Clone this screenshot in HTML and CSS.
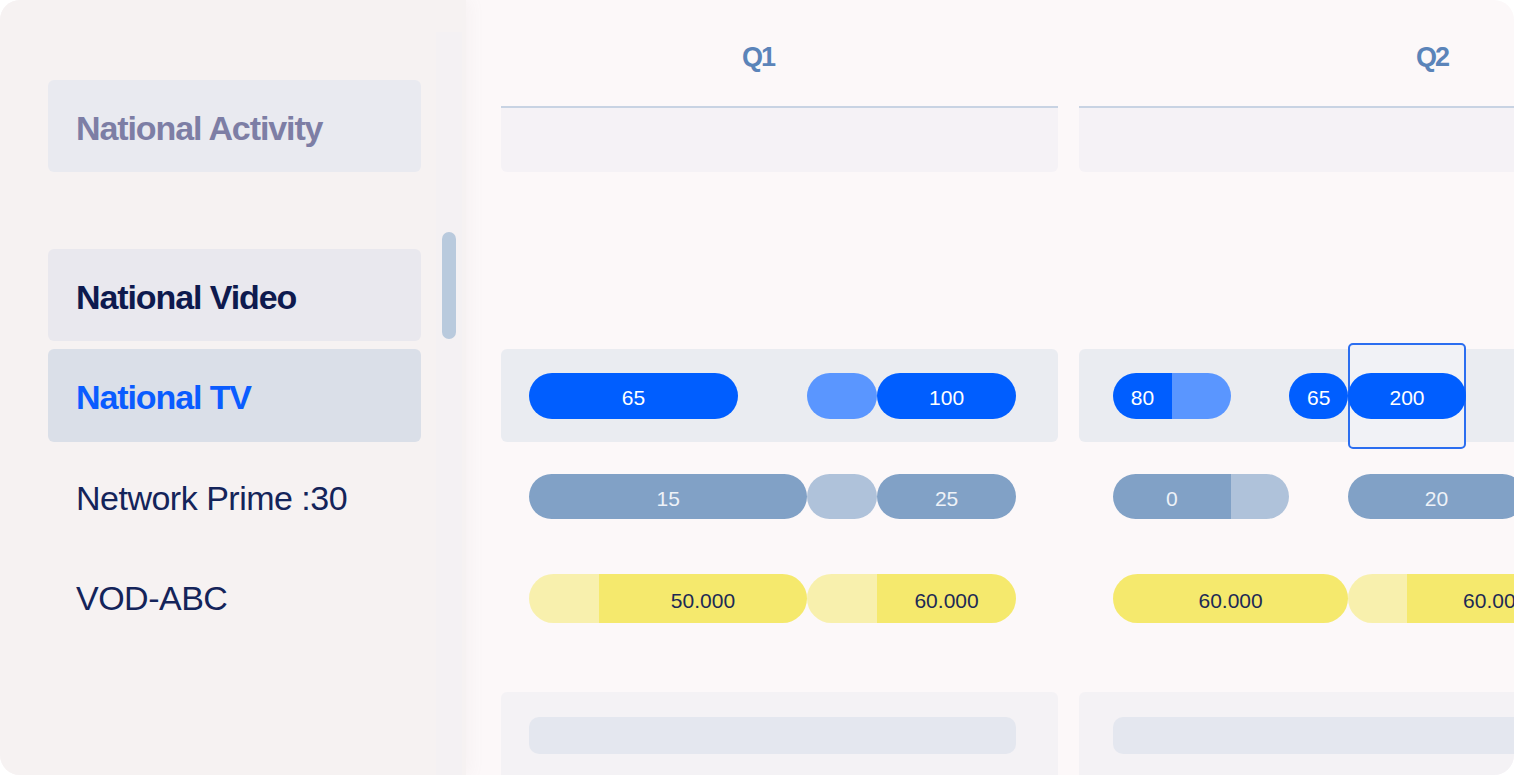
FILE: index.html
```html
<!DOCTYPE html>
<html lang="en">
<head>
<meta charset="utf-8">
<title>Media plan</title>
<link rel="stylesheet" href="styles.css">
</head>
<body>
<div class="card">
  <aside class="side">
    <div class="list">
      <div class="item item-activity">National Activity</div>
      <div class="item item-video">National Video</div>
      <div class="item item-tv">National TV</div>
      <div class="row-label">Network Prime :30</div>
      <div class="row-label">VOD-ABC</div>
    </div>
    <div class="scroll"><div class="thumb"></div></div>
  </aside>

  <main class="board">
    <section class="quarter q1">
      <div class="q-head">Q1</div>
      <div class="q-sub"></div>
      <div class="q-gap"></div>
      <div class="q-row tv-row">
        <div class="track">
          <div class="pill blue" style="grid-column:1 / span 3"><span class="seg dark">65</span></div>
          <div class="pill blue" style="grid-column:5 / span 1"><span class="seg light"></span></div>
          <div class="pill blue" style="grid-column:6 / span 2"><span class="seg dark">100</span></div>
        </div>
      </div>
      <div class="q-row net-row">
        <div class="track">
          <div class="pill steel" style="grid-column:1 / span 4"><span class="seg dark">15</span></div>
          <div class="pill steel" style="grid-column:5 / span 1"><span class="seg light"></span></div>
          <div class="pill steel" style="grid-column:6 / span 2"><span class="seg dark">25</span></div>
        </div>
      </div>
      <div class="q-row vod-row">
        <div class="track">
          <div class="pill yellow" style="grid-column:1 / span 4"><span class="seg light" style="flex:1"></span><span class="seg dark" style="flex:3">50.000</span></div>
          <div class="pill yellow" style="grid-column:5 / span 3"><span class="seg light" style="flex:1"></span><span class="seg dark" style="flex:2">60.000</span></div>
        </div>
      </div>
      <div class="q-row ghost-row">
        <div class="track">
          <div class="ghost" style="grid-column:1 / span 7"></div>
        </div>
      </div>
    </section>

    <section class="quarter q2">
      <div class="q-head">Q2</div>
      <div class="q-sub"></div>
      <div class="q-gap"></div>
      <div class="q-row tv-row">
        <div class="track">
          <div class="pill blue" style="grid-column:1 / span 2"><span class="seg dark" style="flex:1">80</span><span class="seg light" style="flex:1"></span></div>
          <div class="pill blue" style="grid-column:4 / span 1"><span class="seg dark">65</span></div>
          <div class="pill blue selected" style="grid-column:5 / span 2"><span class="seg dark">200</span></div>
        </div>
      </div>
      <div class="q-row net-row">
        <div class="track">
          <div class="pill steel" style="grid-column:1 / span 3"><span class="seg dark" style="flex:2">0</span><span class="seg light" style="flex:1"></span></div>
          <div class="pill steel" style="grid-column:5 / span 3"><span class="seg dark">20</span></div>
        </div>
      </div>
      <div class="q-row vod-row">
        <div class="track">
          <div class="pill yellow" style="grid-column:1 / span 4"><span class="seg dark">60.000</span></div>
          <div class="pill yellow" style="grid-column:5 / span 4"><span class="seg light" style="flex:1"></span><span class="seg dark" style="flex:3">60.000</span></div>
        </div>
      </div>
      <div class="q-row ghost-row">
        <div class="track">
          <div class="ghost" style="grid-column:1 / span 9"></div>
        </div>
      </div>
    </section>
  </main>
</div>
</body>
</html>
```

FILE: styles.css
```css
* { box-sizing: border-box; }

html, body {
  margin: 0;
  padding: 0;
  background: #ffffff;
}

body {
  font-family: "Liberation Sans", Arial, sans-serif;
  width: 1514px;
  height: 776px;
  overflow: hidden;
}

.card {
  width: 1514px;
  height: 775px;
  border-radius: 20px;
  overflow: hidden;
  display: flex;
  background: #fcf8f9;
}

/* ---------- left panel ---------- */
.side {
  flex: 0 0 466px;
  display: flex;
  padding-left: 48px;
  background: #f6f2f2;
  box-shadow: 5px 0 14px rgba(170, 150, 160, 0.06);
  position: relative;
  z-index: 1;
}

.list {
  width: 373px;
  padding-top: 80px;
  display: flex;
  flex-direction: column;
}

.list > * { flex-shrink: 0; }

.item {
  height: 92px;
  display: flex;
  align-items: center;
  padding-left: 28px;
  padding-top: 4px;
  border-radius: 6px;
  font-size: 34px;
  font-weight: 700;
  letter-spacing: -1.1px;
}

.item-activity {
  background: #e9eaf0;
  color: #7d7ea5;
  margin-bottom: 77px;
}

.item-video {
  background: #e9e8ee;
  color: #0e1a4e;
  margin-bottom: 8px;
}

.item-tv {
  height: 93px;
  background: #dadfe8;
  color: #0a5cff;
}

.row-label {
  height: 100px;
  display: flex;
  align-items: center;
  padding-left: 28px;
  font-size: 34px;
  letter-spacing: -0.5px;
  color: #14245a;
}

.item-tv + .row-label { margin-top: 6px; }

.scroll {
  width: 26px;
  margin-left: 15px;
  margin-top: 32px;
  background: rgba(238, 238, 245, 0.3);
}

.thumb {
  width: 14px;
  height: 107px;
  margin: 200px 0 0 6px;
  border-radius: 7px;
  background: #b9cadd;
}

/* ---------- board ---------- */
.board {
  flex: 1;
  display: flex;
  gap: 21px;
  padding-left: 35px;
  overflow: hidden;
}

.quarter {
  display: flex;
  flex-direction: column;
  flex: 0 0 auto;
}

.quarter > * { flex-shrink: 0; }

.q1 { width: 557px; }
.q2 { width: 600px; }

.q-head {
  height: 106px;
  display: flex;
  align-items: center;
  padding-top: 8px;
  font-size: 27px;
  font-weight: 700;
  letter-spacing: -2px;
  color: #5b84b9;
}

.q1 .q-head { padding-left: 241px; }
.q2 .q-head { padding-left: 337px; }

.q-sub {
  height: 66px;
  border-top: 2px solid #c8d3e3;
  background: #f5f2f6;
  border-radius: 0 0 6px 6px;
}

.q-gap { height: 177px; }

.q1 .track { padding-left: 28px; grid-template-columns: repeat(7, 69.6px); }
.q2 .track { padding-left: 34px; grid-template-columns: repeat(9, 58.8px); }

.track {
  display: grid;
  align-items: stretch;
}

.tv-row {
  height: 93px;
  padding-top: 24px;
  background: #eaecf1;
  border-radius: 6px;
}

.tv-row .track { height: 46px; }

.net-row { padding-top: 32px; }
.net-row .track { height: 45px; }

.vod-row { padding-top: 55px; }
.vod-row .track { height: 49px; }

.ghost-row {
  margin-top: 69px;
  height: 100px;
  padding-top: 25px;
  background: #f4f2f5;
  border-radius: 6px 6px 0 0;
}

.ghost-row .track { height: 37px; }

.ghost {
  background: #e4e7ef;
  border-radius: 10px;
}

/* ---------- pills ---------- */
.pill {
  display: flex;
  border-radius: 999px;
  overflow: hidden;
  font-size: 21px;
  position: relative;
}

.seg {
  flex: 1;
  display: flex;
  align-items: center;
  justify-content: center;
  padding-top: 4px;
}

.blue .dark { background: #005eff; color: #ffffff; }
.blue .light { background: #5a96ff; }

.steel .dark { background: #81a1c6; color: #eef2f8; }
.steel .light { background: #afc2da; }

.yellow .dark { background: #f5e96d; color: #1d2a55; }
.yellow .light { background: #f8f0ad; }

.selected {
  overflow: visible;
  z-index: 0;
}

.selected .seg { border-radius: 999px; }

.selected::before {
  content: "";
  position: absolute;
  left: 0;
  right: 0;
  top: -30px;
  bottom: -30px;
  border: 2px solid #2b6ef0;
  border-radius: 5px;
  background: #f1f2f6;
  z-index: -1;
}
```
